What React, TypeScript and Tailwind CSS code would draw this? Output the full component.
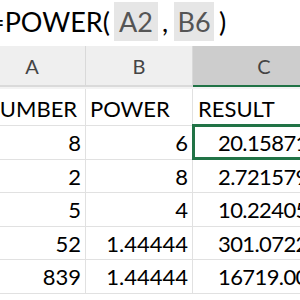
import React from "react";

const rows: [string, string, string, number][] = [
  ["8", "6", "20.15871", 34],
  ["2", "8", "2.721579", 33],
  ["5", "4", "10.22405", 34],
  ["52", "1.44444", "301.0722", 33],
  ["839", "1.44444", "16719.00", 34],
];

export default function App() {
  return (
    <div
      className="w-[300px] h-[300px] overflow-hidden bg-white relative"
      style={{ fontFamily: "Lato, 'Open Sans', sans-serif" }}
    >
      {/* formula bar */}
      <div className="h-[46px] flex items-start pt-[2px] ml-[-11px] text-[27px] text-black whitespace-nowrap">
        <span className="leading-[39px]">=POWER(</span>
        <span className="ml-[4px] h-[39px] w-[44px] bg-[#e6e6e6] text-[#555] leading-[39px] flex justify-center">A2</span>
        <span className="ml-[4px] leading-[39px]">,</span>
        <span className="ml-[6px] h-[39px] w-[40px] bg-[#e6e6e6] text-[#555] leading-[39px] flex justify-center">B6</span>
        <span className="ml-[5px] leading-[39px]">)</span>
      </div>

      {/* grid */}
      <div className="ml-[-21px] w-[360px]">
        {/* header */}
        <div className="grid grid-cols-[107px_107px_146px] h-[41px] text-[20px] text-[#444]">
          <div className="bg-[#efefef] border-r border-[#d9d9d9] border-b-2 border-b-[#dadada] flex items-center justify-center">A</div>
          <div className="bg-[#efefef] border-r border-[#d9d9d9] border-b-2 border-b-[#dadada] flex items-center justify-center">B</div>
          <div className="bg-[#cdcdcd] border-b-2 border-b-[#217346] flex items-center justify-center pr-[4px]">C</div>
        </div>
        <div className="h-[2px] bg-[#f3f3f3]"></div>
        {/* row 1 */}
        <div className="grid grid-cols-[107px_107px_146px] h-[37px] text-[22px] text-black border-b border-[#e1e1e1]">
          <div className="border-r border-[#e1e1e1] flex items-end pl-[4px] overflow-hidden whitespace-nowrap">NUMBER</div>
          <div className="border-r border-[#e1e1e1] flex items-end pl-[4px]">POWER</div>
          <div className="flex items-end pl-[5px]">RESULT</div>
        </div>
        {rows.map(([a, b, c, h], i) => (
          <div
            key={i}
            className="grid grid-cols-[107px_107px_146px] text-[22px] text-black border-b border-[#e1e1e1] relative"
            style={{ height: h }}
          >
            <div className="border-r border-[#e1e1e1] flex items-end justify-end pb-[1px] pr-[4px]">{a}</div>
            <div className="border-r border-[#e1e1e1] flex items-end justify-end pb-[1px] pr-[4px]">{b}</div>
            <div className="flex items-end pb-[1px] pl-[25px] whitespace-nowrap tracking-[-0.6px]">{c}</div>
            {i === 0 && (
              <div className="absolute left-[213px] top-[-2px] w-[160px] h-[36px] border-[3px] border-[#217346] pointer-events-none"></div>
            )}
          </div>
        ))}
      </div>
    </div>
  );
}
